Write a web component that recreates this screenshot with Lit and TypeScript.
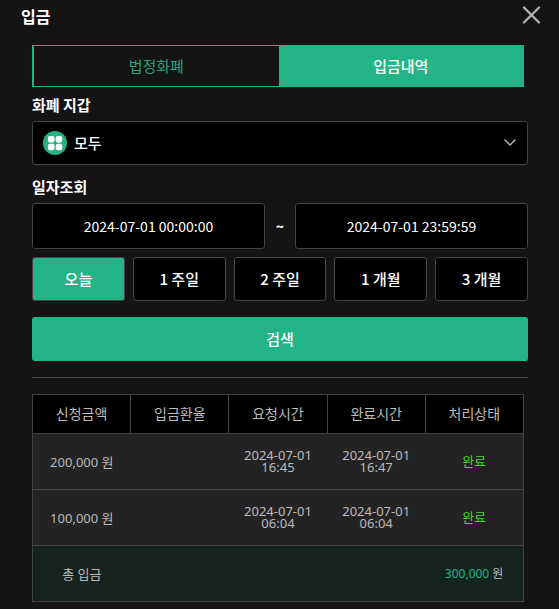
import { LitElement, html, css } from "lit";
import { customElement, state } from "lit/decorators.js";

interface Deposit {
  amount: string;
  rate: string;
  requested: string;
  completed: string;
  status: string;
}

const PERIODS = ["오늘", "1 주일", "2 주일", "1 개월", "3 개월"];
const COLUMNS = ["신청금액", "입금환율", "요청시간", "완료시간", "처리상태"];
const DEPOSITS: Deposit[] = [
  {
    amount: "200,000 원",
    rate: "",
    requested: "2024-07-01 16:45",
    completed: "2024-07-01 16:47",
    status: "완료",
  },
  {
    amount: "100,000 원",
    rate: "",
    requested: "2024-07-01 06:04",
    completed: "2024-07-01 06:04",
    status: "완료",
  },
];

@customElement("app-root")
export class AppRoot extends LitElement {
  @state() private period = 0;
  @state() private tab = 1;

  static styles = css`
    :host {
      --green: #22b486;
      --line: #444444;
      display: block;
      box-sizing: border-box;
      min-height: 100vh;
      background: #141414;
      color: #ffffff;
      font-family: "Noto Sans CJK KR", sans-serif;
      font-size: 15px;
      line-height: 20px;
    }
    * {
      box-sizing: border-box;
    }
    button,
    input,
    select {
      margin: 0;
      font: inherit;
      color: inherit;
    }
    button {
      padding: 0;
      border: 0;
      background: none;
      cursor: pointer;
    }
    header {
      display: flex;
      align-items: center;
      justify-content: space-between;
      height: 32px;
      padding: 0 18px 0 21px;
    }
    h1 {
      margin: 0;
      font-size: 16px;
      font-weight: 700;
    }
    .close,
    .close svg {
      display: block;
    }
    main {
      padding: 13px 31px 7px 32px;
    }
    .tabs {
      display: flex;
      height: 42px;
      margin-right: 4px;
      border: 1px solid var(--green);
      border-left-width: 2px;
    }
    .tab {
      flex: 1;
      color: #27a27b;
    }
    .tab.on {
      background: var(--green);
      color: #ffffff;
      font-weight: 500;
    }
    .label {
      display: block;
      font-weight: 700;
    }
    .wallet-label {
      margin: 8px 0 6px;
    }
    .date-label {
      margin: 12px 0 6px;
    }
    .wallet {
      display: grid;
      align-items: center;
      grid-template-columns: 10px 26px 1fr 14px 11px;
      height: 44px;
    }
    .wallet select {
      grid-area: 1 / 1 / 2 / -1;
      width: 100%;
      height: 44px;
      padding: 0 32px 0 41px;
      appearance: none;
      border: 1px solid var(--line);
      border-radius: 3px;
      background: #000000;
      font-weight: 500;
    }
    .wallet svg {
      display: block;
      z-index: 1;
      pointer-events: none;
    }
    .grid-icon {
      grid-area: 1 / 2;
    }
    .chevron {
      grid-area: 1 / 4;
    }
    .dates {
      display: grid;
      grid-template-columns: 1fr 30px 1fr;
      align-items: center;
      text-align: center;
      font-size: 14px;
    }
    .tilde {
      font-weight: 700;
    }
    .dates input {
      width: 100%;
      height: 46px;
      padding: 0;
      border: 1px solid var(--line);
      border-radius: 3px;
      background: #000000;
      text-align: center;
    }
    .periods {
      display: grid;
      grid-template-columns: repeat(5, 1fr);
      gap: 8px;
      margin: 8px 0 16px;
    }
    .period {
      height: 44px;
      border: 1px solid var(--line);
      border-radius: 3px;
      background: #000000;
      font-weight: 500;
    }
    .period.on {
      background: var(--green);
    }
    .search {
      display: block;
      width: 100%;
      height: 44px;
      border-radius: 3px;
      background: var(--green);
      font-weight: 500;
    }
    hr {
      margin: 16px 0;
      border: 0;
      border-top: 1px solid var(--line);
    }
    .table-wrap {
      margin-right: 4px;
    }
    table {
      width: 100%;
      border-collapse: collapse;
      table-layout: fixed;
      border: 1px solid var(--line);
      color: #bbbbbb;
      font-family: "Noto Sans", "Noto Sans CJK KR", sans-serif;
      font-size: 13px;
      text-align: center;
    }
    th,
    td {
      padding: 0;
      font-weight: 400;
    }
    th {
      height: 39px;
      border: 1px solid var(--line);
      background: #000000;
      font-size: 14px;
    }
    td {
      height: 56px;
      border-bottom: 1px solid var(--line);
      background: #232323;
    }
    .time {
      padding: 0 10px 2px;
      line-height: 12px;
    }
    .status {
      padding-bottom: 2px;
      color: #45d62c;
    }
    tfoot td {
      background: #15231e;
    }
    .sum {
      font-size: 12px;
    }
    .total {
      color: var(--green);
    }
  `;

  render() {
    return html`
      <header>
        <h1>입금</h1>
        <button class="close" aria-label="닫기">
          <svg width="19" height="20" viewBox="0 0 19 20" fill="none" stroke="#b4b4b4" stroke-width="2.2" stroke-linecap="round">
            <path d="M2 1.5 17 16.5M17 1.5 2 16.5" />
          </svg>
        </button>
      </header>
      <main>
        <div class="tabs" role="tablist">
          ${["법정화폐", "입금내역"].map(
            (name, i) => html`<button
              role="tab"
              aria-selected=${this.tab === i}
              class="tab ${this.tab === i ? "on" : ""}"
              @click=${() => (this.tab = i)}
            >${name}</button>`
          )}
        </div>

        <label class="label wallet-label" for="wallet">화폐 지갑</label>
        <div class="wallet">
          <select id="wallet"><option>모두</option></select>
          <svg class="grid-icon" width="26" height="26" viewBox="0 0 26 26">
            <circle cx="13" cy="13" r="12" fill="#22b486" />
            <g fill="#ffffff">
              <rect x="6" y="6" width="6.5" height="6.5" rx="2" />
              <rect x="13.7" y="6" width="6.5" height="6.5" rx="2" />
              <rect x="6" y="13.7" width="6.5" height="6.5" rx="2" />
              <rect x="13.7" y="13.7" width="6.5" height="6.5" rx="2" />
            </g>
          </svg>
          <svg class="chevron" width="14" height="10" viewBox="0 0 14 10" fill="none" stroke="#b4b4b4" stroke-width="1.5">
            <path d="m1.5 1.5 5.5 5.5 5.5-5.5" />
          </svg>
        </div>

        <label class="label date-label" for="from">일자조회</label>
        <div class="dates">
          <input id="from" type="text" value="2024-07-01 00:00:00" />
          <span class="tilde">~</span>
          <input type="text" aria-label="종료일" value="2024-07-01 23:59:59" />
        </div>

        <div class="periods">
          ${PERIODS.map(
            (name, i) => html`<button
              class="period ${this.period === i ? "on" : ""}"
              aria-pressed=${this.period === i}
              @click=${() => (this.period = i)}
            >${name}</button>`
          )}
        </div>
        <button class="search">검색</button>
        <hr />

        <div class="table-wrap">
          <table>
            <thead>
              <tr>${COLUMNS.map((c) => html`<th scope="col">${c}</th>`)}</tr>
            </thead>
            <tbody>
              ${DEPOSITS.map(
                (d) => html`<tr>
                  <td>${d.amount}</td>
                  <td>${d.rate}</td>
                  <td class="time">${d.requested}</td>
                  <td class="time">${d.completed}</td>
                  <td class="status">${d.status}</td>
                </tr>`
              )}
            </tbody>
            <tfoot>
              <tr>
                <td>총 입금</td>
                <td></td>
                <td></td>
                <td></td>
                <td class="sum"><span class="total">300,000</span> 원</td>
              </tr>
            </tfoot>
          </table>
        </div>
      </main>
    `;
  }
}
